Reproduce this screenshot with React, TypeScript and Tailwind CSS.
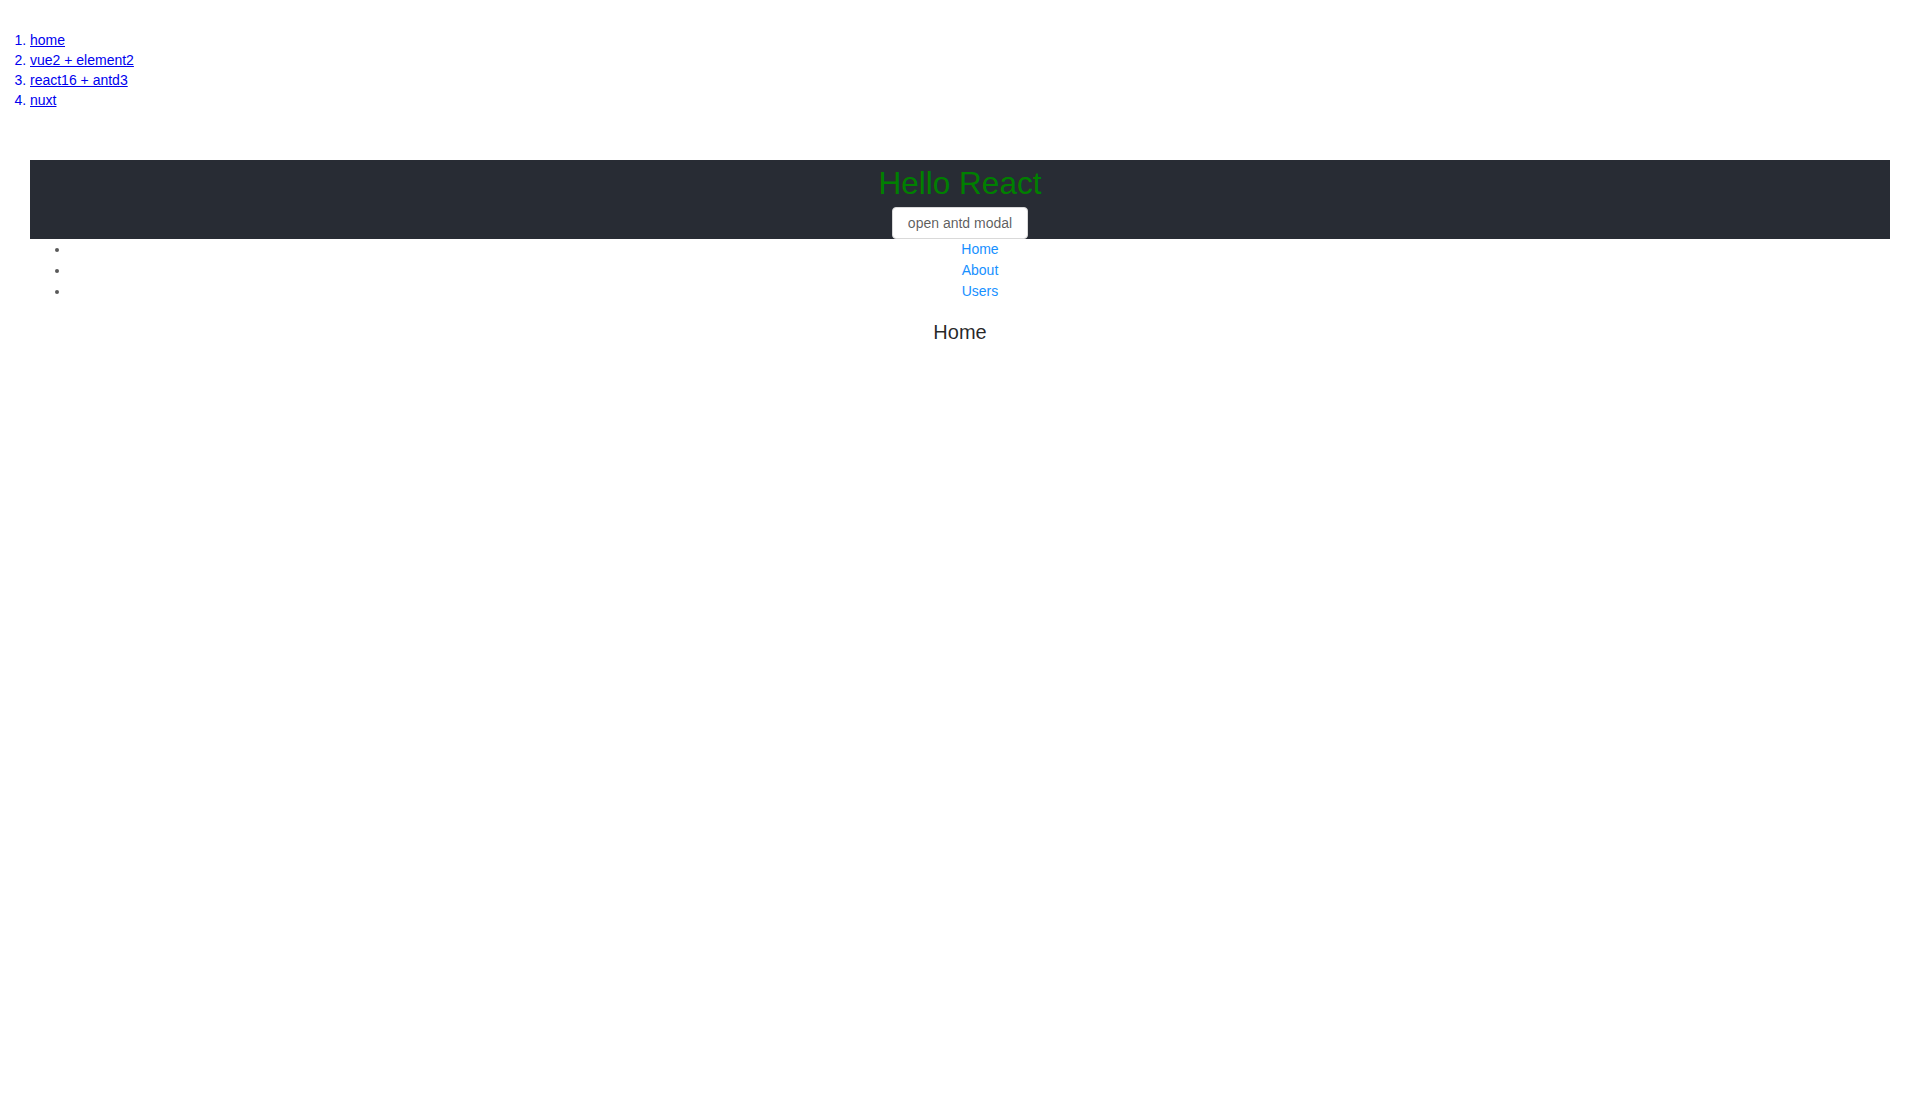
import React from "react";

const apps = [
  { name: "home", href: "#/" },
  { name: "vue2 + element2", href: "#/vue" },
  { name: "react16 + antd3", href: "#/react" },
  { name: "nuxt", href: "#/nuxt" },
];

const routes = ["Home", "About", "Users"];

export default function App() {
  return (
    <div className="min-h-screen bg-white px-[30px] font-['Liberation_Sans',Arial,sans-serif]">
      <ol className="mt-[30px] list-decimal text-[14px] leading-[20px] text-[#0000ee]">
        {apps.map((app) => (
          <li key={app.name}>
            <a href={app.href} className="underline">
              {app.name}
            </a>
          </li>
        ))}
      </ol>

      {/* sub app container */}
      <div className="mt-[50px] text-[14px] leading-[21px] text-black/65">
        <header className="bg-[#282c34] text-center">
          <h1 className="m-0 text-[31.5px] leading-[47px] font-medium text-[#008000]">Hello React</h1>
          <button className="h-[32px] rounded-[4px] border border-[#d9d9d9] bg-white px-[15px] text-[14px] text-black/65">
            open antd modal
          </button>
        </header>
        <ul className="mb-[15px] list-disc pl-10 text-center">
          {routes.map((r) => (
            <li key={r}>
              <a href={`#/${r.toLowerCase()}`} className="text-[#1890ff]">
                {r}
              </a>
            </li>
          ))}
        </ul>
        <h2 className="text-center text-[20px] leading-[30px] font-medium text-black/85">Home</h2>
      </div>
    </div>
  );
}
